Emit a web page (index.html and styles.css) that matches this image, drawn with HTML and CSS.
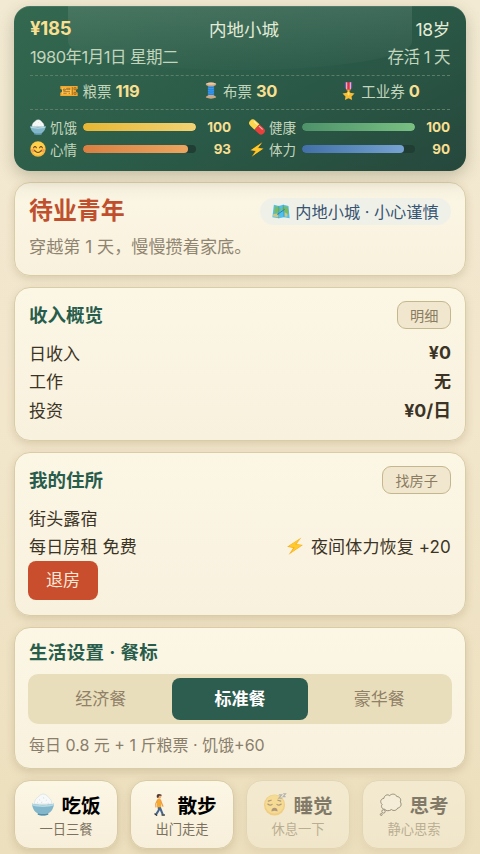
FILE: index.html
```html
<!DOCTYPE html>
<html lang="zh-CN">
<head>
<meta charset="utf-8">
<meta name="viewport" content="width=device-width, initial-scale=1">
<title>内地小城</title>
<link rel="stylesheet" href="styles.css">
</head>
<body>
<svg class="sprite" aria-hidden="true">
  <symbol id="bowl" viewBox="0 0 24 24">
    <path d="M3 11.500C3 8 4.500 5.500 7 4.200 8.500 2 10.500.8 13 1.200c2.500.4 4 2 5 3.600C20 6 21.500 8.500 21 11.500z" fill="#f7f8f8" stroke="#d3dadd" stroke-width=".6"/>
    <path d="M8 7l1 .6M12 5l1.200.3M15 8l1-.7M10 10l1.200-.5M6 10l.8-.5M17 10.500l.8.2" stroke="#c5cdd2" stroke-width=".7"/>
    <path d="M.6 11c3 1.700 19.800 1.700 22.800 0 0 5-2.800 8.800-6 10.300v1.400c-2 1-8.800 1-10.800 0v-1.400C3.400 19.800.6 16 .6 11z" fill="#82b6ca"/>
    <path d="M.6 11c4 2.300 18.800 2.300 22.800 0v1.900c-4 2.300-18.800 2.300-22.800 0z" fill="#b3dae6"/>
    <path d="M6.600 21.300c3 .8 7.800.8 10.800 0v1.400c-2 1-8.800 1-10.800 0z" fill="#568ea8"/>
  </symbol>
  <symbol id="smile" viewBox="0 0 24 24">
    <circle cx="12" cy="12" r="11.500" fill="#f6b83c"/><circle cx="12" cy="11" r="10" fill="#ffd04a"/>
    <circle cx="5" cy="14" r="2.800" fill="#f58c50" opacity=".7"/><circle cx="19" cy="14" r="2.800" fill="#f58c50" opacity=".7"/>
    <path d="M5.500 10q2-3.500 4 0M14.500 10q2-3.500 4 0M7 14.500q5 5.500 10 0" fill="none" stroke="#69401e" stroke-width="1.700" stroke-linecap="round"/>
  </symbol>
  <symbol id="pill" viewBox="0 0 24 24">
    <g transform="rotate(43 12 12)"><path d="M12 6.500H3.500a5.500 5.500 0 0 0 0 11H12z" fill="#fbd64e"/><path d="M12 6.500h8.500a5.500 5.500 0 0 1 0 11H12z" fill="#e8403c"/><path d="M3.500 9h6M14 9h6" stroke="#fff" stroke-width="1.600" stroke-linecap="round" opacity=".65"/></g>
  </symbol>
  <symbol id="bolt" viewBox="0 0 24 24">
    <path d="M20.500.5L1.500 13l8 1.700L3.500 23.500 22.500 10.500l-8.500-1.300z" fill="#f9ae1a"/><path d="M19.500 2L3.500 12.300l8.200 1.700L6 21.300 20.700 11l-8.700-1.200z" fill="#ffcb2c"/>
  </symbol>
  <symbol id="ticket" viewBox="0 0 27 18">
    <path d="M.5 1.500h26v4.500a2.500 2.500 0 0 0 0 5.500v5H.5v-5a2.500 2.500 0 0 0 0-5.500z" fill="#f5a92c"/><path d="M3 4h14v10H3z" fill="#ffc44e"/>
    <path d="M18.500 3v12M21 4h3v3h-3zM21 11h3v3h-3zM5 6h3v2H5zM10 5h5v2h-5zM5 10h10M5 12.500h5M13 12.500h2" fill="none" stroke="#8e5e25" stroke-width="1.100"/>
  </symbol>
  <symbol id="spool" viewBox="0 0 20 30">
    <path d="M6 5h8v20H6z" fill="#2482d6"/><path d="M4.500 7q5.500 2 11 0v17q-5.500 3-11 0z" fill="#2584dc"/>
    <path d="M5 11q5 2 10 0M5 15q5 2 10 0M5 19q5 2 10 0" fill="none" stroke="#57aeee" stroke-width="1"/>
    <path d="M1 3q9-4 18 0v2.500q-3 1.500-5 2.500H6Q4 7 1 5.500zM1 26q3-2 5-3h8q2 1 5 3v1.500q-9 4-18 0z" fill="#cda884"/>
    <path d="M1 3q9-4 18 0-9 4-18 0z" fill="#edcba6"/>
  </symbol>
  <symbol id="medal" viewBox="0 0 22 30">
    <path d="M5 .5h12v9L13 14H9L5 9.500z" fill="#e02f49"/><path d="M5 .5h2.400v11.500L5 9.500zM14.600.5H17v9l-2.400 2.500z" fill="#5b5fb8"/><path d="M7.400.5h1.400v12.500l-1.400-1zM13.200.5h1.400V12l-1.400 1z" fill="#f3edf0"/>
    <path d="M8 12.500h6v2.500H8z" fill="#c68a2b"/><path d="M11 12.500l2.900 5.500 7.100 1.200-5 4.800 1 5.800-6-2.800-6 2.800 1-5.800-5-4.800L8.100 18z" fill="#f9bd35"/><path d="M11 16l2 4-2 3-2-3z" fill="#ffe17a"/>
  </symbol>
  <symbol id="map" viewBox="0 0 24 20">
    <path d="M2.500 1l6.500 1.500L15 1l7 1.500L23.500 19l-7.500-1.500L9 19l-8.500-1.500z" fill="#4fc0ee"/>
    <path d="M4 3l5 1 3.500 2.500-2 3.500-3 1-1.500 4-3-4zM14 3l7 1 1 9-3.500 1-2-4-3.500-1z" fill="#79ba64"/><path d="M1.500 13.500l5-1 3.500 3.500v2l-8.500-1.500zM17 11l3.500 2v4l-4-.5z" fill="#d1c67b"/><path d="M9 2.500V19M15 1l1 16.500" stroke="#3399bb" stroke-width=".8"/>
    <path d="M7 14l10-7" stroke="#2c7fae" stroke-width="1.300"/>
  </symbol>
  <symbol id="walk" viewBox="0 0 20 34">
    <path d="M9.500 19l.3 6-4.300 7M10.500 19l2.500 6.500 2.500 6" stroke="#46658c" stroke-width="3" fill="none" stroke-linejoin="round"/>
    <path d="M7 9.500q3.500-2 5.700 0L13.500 21H7z" fill="#f6a92b"/><path d="M7.500 11l-2.300 5 .3 4.500M12.500 11l1.700 5 1.600 3.500" stroke="#e99a4b" stroke-width="1.800" fill="none" stroke-linecap="round"/>
    <circle cx="10.300" cy="5.300" r="3.200" fill="#e9ae75"/><path d="M7 7Q5.300 1.300 10 1.300q4.500 0 4 2.800l-3.800-.2L9 7z" fill="#513a32"/><path d="M4 31l2.500 2M14.500 32.500h3.500" stroke="#32373e" stroke-width="1.900" stroke-linecap="round"/>
  </symbol>
  <symbol id="sleep" viewBox="0 0 24 24">
    <circle cx="11.500" cy="12.500" r="11" fill="#f5b83a"/><circle cx="11.500" cy="11.800" r="9.700" fill="#ffd55e"/>
    <path d="M4.500 11.500q2.500 2.300 4.500.3M14 11.800q2 2 4.500-.3M5 8.500l3-1M15 7.500l3 1" fill="none" stroke="#654426" stroke-width="1.200" stroke-linecap="round"/><path d="M8.300 19.200q0-3.700 3.200-3.700t3.200 3.700q-3.200-1.600-6.400 0z" fill="#68402a"/>
    <path d="M16 2h3l-3 3.500h3.500M20.500.8H23l-2.500 3H23" fill="none" stroke="#6b7c9d" stroke-width="1.200"/>
  </symbol>
  <symbol id="thought" viewBox="0 0 26 26">
    <g fill="#fffdf7" stroke="#28251f" stroke-width="1.100"><path d="M6 18.500C2 18 1.500 14.500 3 13 0 10 1.500 6.500 5 6 5.500 2.500 9 1 11.500 3 14 .2 18.500 1 19.500 4c3.500 0 5.500 3.500 4 6 2 3 .5 6.500-3 7-1 3-5 3.500-7 1.700-2.500 1.900-6 1.800-7.500-.2z"/><circle cx="4.500" cy="20.800" r="1.900"/><circle cx="2" cy="24.300" r="1.100"/></g>
  </symbol>
</svg>

<main class="page">
  <header class="status">
    <div class="status-row">
      <strong class="money">¥185</strong><span class="place">内地小城</span><span class="age">18岁</span>
    </div>
    <div class="status-row status-date"><span class="date">1980年1月1日 星期二</span><span class="days">存活 1 天</span></div>
    <div class="tokens">
      <div class="token"><svg class="i-ticket"><use href="#ticket"/></svg>粮票<b>119</b></div>
      <div class="token"><svg class="i-spool"><use href="#spool"/></svg>布票<b>30</b></div>
      <div class="token"><svg class="i-medal"><use href="#medal"/></svg>工业券<b>0</b></div>
    </div>
    <div class="stats">
      <div class="stat"><svg><use href="#bowl"/></svg><span>饥饿</span><div class="track"><div class="fill hunger" style="width:100%"></div></div><b>100</b></div>
      <div class="stat"><svg><use href="#pill"/></svg><span>健康</span><div class="track"><div class="fill health" style="width:100%"></div></div><b>100</b></div>
      <div class="stat"><svg><use href="#smile"/></svg><span>心情</span><div class="track"><div class="fill mood" style="width:93%"></div></div><b>93</b></div>
      <div class="stat"><svg class="i-bolt"><use href="#bolt"/></svg><span>体力</span><div class="track"><div class="fill energy" style="width:90%"></div></div><b>90</b></div>
    </div>
  </header>

  <section class="card identity">
    <div class="card-head"><h1>待业青年</h1><span class="badge"><svg><use href="#map"/></svg>内地小城 · 小心谨慎</span></div>
    <p class="intro">穿越第 1 天，慢慢攒着家底。</p>
  </section>

  <section class="card income">
    <div class="card-head"><h2>收入概览</h2><button class="small-btn">明细</button></div>
    <div class="rows">
      <div class="row"><span>日收入</span><b>¥0</b></div>
      <div class="row"><span>工作</span><b>无</b></div>
      <div class="row"><span>投资</span><b>¥0/日</b></div>
    </div>
  </section>

  <section class="card home">
    <div class="card-head"><h2>我的住所</h2><button class="small-btn">找房子</button></div>
    <div class="rows">
      <div class="row"><span>街头露宿</span></div>
      <div class="row"><span>每日房租 免费</span><span class="recover"><svg><use href="#bolt"/></svg>夜间体力恢复 +20</span></div>
    </div>
    <button class="leave">退房</button>
  </section>

  <section class="card meals">
    <h2>生活设置 · 餐标</h2>
    <div class="segments"><button>经济餐</button><button class="active">标准餐</button><button>豪华餐</button></div>
    <p class="meal-note">每日 0.8 元 + 1 斤粮票 · 饥饿+60</p>
  </section>

  <nav class="actions">
    <button class="action"><span class="action-title"><svg><use href="#bowl"/></svg>吃饭</span><small>一日三餐</small></button>
    <button class="action"><span class="action-title"><svg><use href="#walk"/></svg>散步</span><small>出门走走</small></button>
    <button class="action" disabled><span class="action-title"><svg><use href="#sleep"/></svg>睡觉</span><small>休息一下</small></button>
    <button class="action" disabled><span class="action-title"><svg><use href="#thought"/></svg>思考</span><small>静心思索</small></button>
  </nav>
</main>
</body>
</html>
```
FILE: styles.css
```css
* { box-sizing: border-box; }
body {
  margin: 0;
  height: 854px;
  overflow: hidden;
  background: linear-gradient(#f3ead3, #f2e6cb 50%, #ecdfbd);
  color: #3b3426;
  font-family: Inter, "Noto Sans CJK SC", sans-serif;
  font-size: 17px;
}
h1, h2, p { margin: 0; }
button { font: inherit; padding: 0; margin: 0; border: 0; color: inherit; white-space: nowrap; }
svg { display: block; flex: none; }
.sprite { position: absolute; width: 0; height: 0; }
.page { padding: 6px 14px 0; display: flex; flex-direction: column; }

.status {
  position: relative;
  height: 165px;
  padding: 8px 16px 0;
  border-radius: 16px;
  background: linear-gradient(150deg, #34684f, #2b5c49 50%, #26483c);
  color: #e4ecd7;
  box-shadow: 0 5px 16px rgba(65, 67, 40, .28), inset 0 1px 0 rgba(255, 255, 255, .1);
  margin-bottom: 11px;
}
.status::before {
  content: "";
  position: absolute;
  left: 54px;
  top: 0;
  width: 344px;
  height: 64px;
  border-radius: 0 0 50% 50% / 0 0 28px 28px;
  background: linear-gradient(rgba(255, 255, 255, .1), rgba(255, 255, 255, .015));
}
.status > * { position: relative; }
.status-row { height: 28px; display: grid; grid-template-columns: 1fr auto 1fr; align-items: center; }
.money { color: #f8df91; font-size: 18.500px; letter-spacing: -.3px; }
.place { font-size: 17.500px; padding-left: 8px; }
.age { justify-self: end; font-size: 17.500px; letter-spacing: -.3px; }
.status-row.status-date { height: 27px; display: flex; justify-content: space-between; color: #c3d5bc; }
.date { font-size: 16.500px; letter-spacing: -.5px; }
.days { font-size: 16.500px; letter-spacing: -.5px; }
.tokens {
  height: 35px;
  margin-top: 6px;
  padding-bottom: 4px;
  display: grid;
  grid-template-columns: repeat(3, 1fr);
  border-top: 1px dashed #5c7e67;
  border-bottom: 1px dashed #5c7e67;
}
.token { display: flex; align-items: center; justify-content: center; font-size: 14.500px; color: #c3d5bc; }
.token svg { margin-right: 4px; }
.token b { font-size: 16.500px; color: #f8df91; margin-left: 4px; letter-spacing: -.3px; }
.i-ticket { width: 18px; height: 12px; }
.i-spool { width: 16px; height: 17px; }
.i-medal { width: 17px; height: 18px; }
.stats { margin-top: 6px; display: grid; grid-template-columns: 201px 201px; grid-auto-rows: 22px; column-gap: 18px; }
.stat { display: flex; align-items: center; font-size: 13.500px; color: #c3d5bc; }
.stat svg { width: 16px; height: 16px; }
.stat .i-bolt { height: 15px; }
.stat span { width: 27px; margin: -1px 6px 0 4px; white-space: nowrap; }
.track { width: 113px; height: 8px; border-radius: 4px; background: #203e33; overflow: hidden; }
.fill { height: 100%; border-radius: 4px; }
.hunger { background: linear-gradient(90deg, #e7b634, #f1d273); }
.mood { background: linear-gradient(90deg, #d97f42, #eca55f); }
.health { background: linear-gradient(90deg, #4d926a, #79c082); }
.energy { background: linear-gradient(90deg, #426fa7, #76a3d2); }
.stat b { margin-left: auto; color: #f8df91; font-size: 13.500px; letter-spacing: -.1px; }

.card {
  border: 1px solid #d9cda8;
  border-radius: 16px;
  background: linear-gradient(#fcf6e5, #f8f1de);
  box-shadow: 0 3px 9px rgba(119, 96, 48, .2);
  padding: 0 14px;
  margin-bottom: 11px;
}
.card-head { display: flex; align-items: center; justify-content: space-between; }
h1 { font-size: 23.900px; line-height: 30px; color: #c04f2e; }
h2 { font-size: 18.500px; line-height: 26px; color: #285d4c; font-weight: 700; }
.identity { height: 94px; padding-top: 13px; background: linear-gradient(#f3eddb, #fbf5e3 20%, #f8f1de); }
.badge { height: 27px; width: 191px; border-radius: 14px; background: #eff1e9; color: #375473; font-size: 16.200px; display: flex; align-items: center; justify-content: center; white-space: nowrap; }
.badge svg { width: 18px; height: 15px; margin-right: 5px; }
.intro { color: #8f8470; font-size: 17.150px; line-height: 26px; margin-top: 8px; }
.income { height: 154px; padding-top: 13px; }
.income .rows { margin-top: 9px; }
.small-btn { height: 28px; padding: 0 12px; border: 1px solid #c5b78d; border-radius: 9px; background: #f1e7ce; color: #8b7b60; font-size: 14.200px; line-height: 25px; }
.income .small-btn { width: 54px; }
.row { height: 28.600px; display: flex; align-items: center; justify-content: space-between; }
.row b { font-size: 17.800px; }
.row:nth-child(2) b { font-size: 17px; }
.home { height: 164px; padding-top: 13px; }
.home .rows { margin-top: 9px; }
.recover { display: flex; align-items: center; letter-spacing: .15px; }
.home .row > span:first-child { letter-spacing: .15px; }
.recover svg { width: 18px; height: 20px; margin-right: 7px; }
.leave { display: block; width: 70px; height: 39px; margin: 1px 0 0 -1px; border-radius: 8px; background: #c94e2e; color: #fbe9d7; line-height: 37px; }
.meals { height: 142px; padding-top: 11px; }
.meals h2 { letter-spacing: .35px; }
.segments { height: 50px; margin: 9px -1px 0; padding: 4px 5px; border-radius: 10px; background: #e9debb; display: grid; grid-template-columns: repeat(3, 1fr); gap: 4px; }
.segments button { background: none; border-radius: 8px; color: #908068; line-height: 40px; }
.segments .active { background: #2d5d4f; color: #fff; font-weight: 700; }
.meal-note { color: #8a7e6c; font-size: 16px; line-height: 24px; margin-top: 9px; }

.actions { display: grid; grid-template-columns: repeat(4, 1fr); gap: 12px; }
.action {
  height: 69px;
  border: 1px solid #d9cba5;
  border-radius: 16px;
  background: linear-gradient(#fcf6e5, #f7efda);
  box-shadow: 0 3px 8px rgba(119, 96, 48, .2);
  display: flex;
  flex-direction: column;
  align-items: center;
  padding-top: 8px;
  color: #000;
}
.action-title { display: flex; align-items: center; height: 31px; font-size: 19.600px; font-weight: 700; }
.action-title svg { width: 24px; height: 23px; margin-right: 6px; }
.action small { font-size: 13.300px; line-height: 18px; color: #7c715f; }
.action:disabled { opacity: .45; }
```
